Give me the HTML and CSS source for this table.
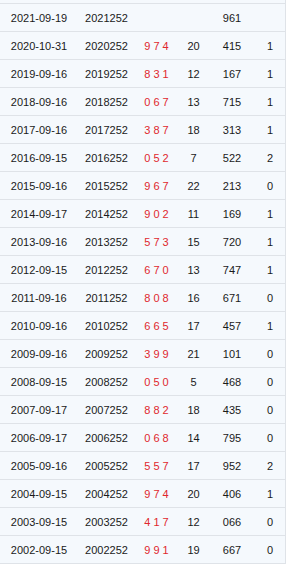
FILE: index.html
```html
<!DOCTYPE html>
<html>
<head>
<meta charset="utf-8">
<link rel="stylesheet" href="styles.css">
</head>
<body>
<div class="wrap">
<table class="draws">
<colgroup><col class="c1"><col class="c2"><col class="c3"><col class="c4"><col class="c5"><col class="c6"></colgroup>
<tbody>
<tr><td>2021-09-19</td><td>2021252</td><td class="red"></td><td></td><td>961</td><td></td></tr>
<tr><td>2020-10-31</td><td>2020252</td><td class="red">9 7 4</td><td>20</td><td>415</td><td>1</td></tr>
<tr><td>2019-09-16</td><td>2019252</td><td class="red">8 3 1</td><td>12</td><td>167</td><td>1</td></tr>
<tr><td>2018-09-16</td><td>2018252</td><td class="red">0 6 7</td><td>13</td><td>715</td><td>1</td></tr>
<tr><td>2017-09-16</td><td>2017252</td><td class="red">3 8 7</td><td>18</td><td>313</td><td>1</td></tr>
<tr><td>2016-09-15</td><td>2016252</td><td class="red">0 5 2</td><td>7</td><td>522</td><td>2</td></tr>
<tr><td>2015-09-16</td><td>2015252</td><td class="red">9 6 7</td><td>22</td><td>213</td><td>0</td></tr>
<tr><td>2014-09-17</td><td>2014252</td><td class="red">9 0 2</td><td>11</td><td>169</td><td>1</td></tr>
<tr><td>2013-09-16</td><td>2013252</td><td class="red">5 7 3</td><td>15</td><td>720</td><td>1</td></tr>
<tr><td>2012-09-15</td><td>2012252</td><td class="red">6 7 0</td><td>13</td><td>747</td><td>1</td></tr>
<tr><td>2011-09-16</td><td>2011252</td><td class="red">8 0 8</td><td>16</td><td>671</td><td>0</td></tr>
<tr><td>2010-09-16</td><td>2010252</td><td class="red">6 6 5</td><td>17</td><td>457</td><td>1</td></tr>
<tr><td>2009-09-16</td><td>2009252</td><td class="red">3 9 9</td><td>21</td><td>101</td><td>0</td></tr>
<tr><td>2008-09-15</td><td>2008252</td><td class="red">0 5 0</td><td>5</td><td>468</td><td>0</td></tr>
<tr><td>2007-09-17</td><td>2007252</td><td class="red">8 8 2</td><td>18</td><td>435</td><td>0</td></tr>
<tr><td>2006-09-17</td><td>2006252</td><td class="red">0 6 8</td><td>14</td><td>795</td><td>0</td></tr>
<tr><td>2005-09-16</td><td>2005252</td><td class="red">5 5 7</td><td>17</td><td>952</td><td>2</td></tr>
<tr><td>2004-09-15</td><td>2004252</td><td class="red">9 7 4</td><td>20</td><td>406</td><td>1</td></tr>
<tr><td>2003-09-15</td><td>2003252</td><td class="red">4 1 7</td><td>12</td><td>066</td><td>0</td></tr>
<tr><td>2002-09-15</td><td>2002252</td><td class="red">9 9 1</td><td>19</td><td>667</td><td>0</td></tr>
</tbody>
</table>
</div>
</body>
</html>
```
FILE: styles.css
```css
html, body {
  margin: 0;
  padding: 0;
  background: #ffffff;
}
.wrap {
  width: 285px;
  padding-top: 3px;
  background: #f5f9fd;
  border-right: 1px solid #dfe3e8;
}
.draws {
  width: 285px;
  border-collapse: collapse;
  table-layout: fixed;
  font-family: "Liberation Sans", Arial, sans-serif;
  font-size: 11px;
  color: #1a1a1a;
  border-top: 1px solid #dfe3e8;
}
.c1 { width: 78px; }
.c2 { width: 57px; }
.c3 { width: 43px; }
.c4 { width: 31px; }
.c5 { width: 46px; }
.c6 { width: 30px; }
.draws td {
  height: 27px;
  padding: 0;
  text-align: center;
  vertical-align: middle;
  border-bottom: 1px solid #dfe3e8;
  white-space: pre;
}
.draws td.red {
  color: #e0282e;
}
```
